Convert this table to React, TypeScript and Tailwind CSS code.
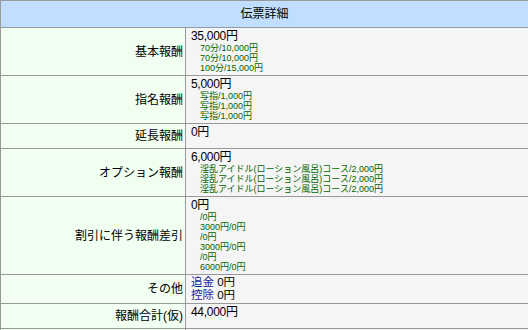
import React from 'react';

type Row = {
  label: string;
  total?: string;
  details?: string[];
  custom?: React.ReactNode;
};

const rows: Row[] = [
  { label: '基本報酬', total: '35,000円', details: ['70分/10,000円', '70分/10,000円', '100分/15,000円'] },
  { label: '指名報酬', total: '5,000円', details: ['写指/1,000円', '写指/1,000円', '写指/1,000円'] },
  { label: '延長報酬', total: '0円' },
  {
    label: 'オプション報酬',
    total: '6,000円',
    details: [
      '淫乱アイドル(ローション風呂)コース/2,000円',
      '淫乱アイドル(ローション風呂)コース/2,000円',
      '淫乱アイドル(ローション風呂)コース/2,000円',
    ],
  },
  {
    label: '割引に伴う報酬差引',
    total: '0円',
    details: ['/0円', '3000円/0円', '/0円', '3000円/0円', '/0円', '6000円/0円'],
  },
  {
    label: 'その他',
    custom: (
      <div className="-my-[1px] text-[11.5px] leading-[13px]">
        <div>
          <span className="text-[#1a1a99]">追金</span> 0円
        </div>
        <div>
          <span className="text-[#1a1a99]">控除</span> 0円
        </div>
      </div>
    ),
  },
  { label: '報酬合計(仮)', total: '44,000円' },
];

function DetailRow({ row }: { row: Row }) {
  return (
    <div className="flex border-b border-[#999999] min-h-[25px]">
      <div className="w-[185px] shrink-0 bg-[#f0fff0] border-r border-[#999999] flex items-center justify-end pr-[2px] text-[12px]">
        {row.label}
      </div>
      <div className="flex-1 bg-[#f5f5f5] pl-[5px] py-[2px]">
        {row.custom ?? (
          <>
            <div className="text-[12px] leading-[13px] tracking-[-0.3px]">{row.total}</div>
            {row.details && (
              <div className="pl-[9px] text-[9px] leading-[10px] text-[#006400]">
                {row.details.map((d, i) => (
                  <div key={i}>{d}</div>
                ))}
              </div>
            )}
          </>
        )}
      </div>
    </div>
  );
}

export default function App() {
  return (
    <div className="w-[528px] h-[330px] overflow-hidden bg-white text-black font-['Liberation_Sans','Noto_Sans_CJK_JP',sans-serif]">
      <div className="border-l border-t border-[#999999]">
        <div className="h-[27px] bg-[#c0deff] border-b border-[#8e9cab] flex items-center justify-center text-[12px]">
          伝票詳細
        </div>
        {rows.map((r, i) => (
          <DetailRow key={i} row={r} />
        ))}
        <div className="flex h-[20px]">
          <div className="w-[185px] shrink-0 bg-[#f0fff0] border-r border-[#999999]" />
          <div className="flex-1 bg-[#f5f5f5]" />
        </div>
      </div>
    </div>
  );
}
